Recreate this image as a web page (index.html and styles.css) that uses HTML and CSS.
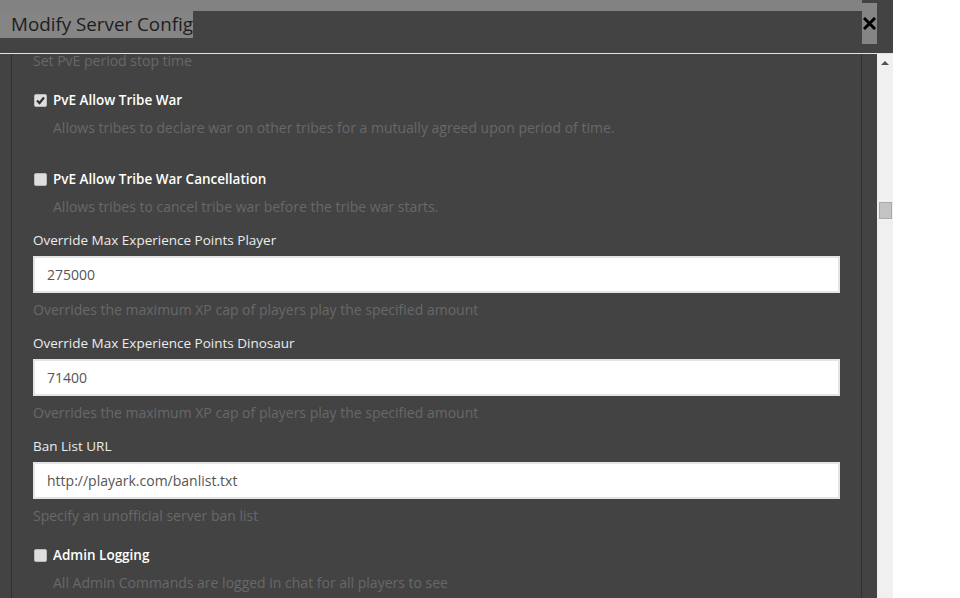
FILE: index.html
```html
<!DOCTYPE html>
<html>
<head>
<meta charset="utf-8">
<link rel="stylesheet" href="styles.css">
</head>
<body>
<div class="modal">
  <div class="header">
    <div class="title-wrap">
      <div class="band"></div>
      <span class="title">Modify Server Config</span>
    </div>
    <div class="close">
      <svg width="13" height="13" viewBox="0 0 13 13"><path d="M2 2 L11 11 M11 2 L2 11" stroke="#000" stroke-width="3" stroke-linecap="square"/></svg>
    </div>
  </div>
  <div class="body">
    <div class="content">
      <div class="help first">Set PvE period stop time</div>

      <div class="check-row gap-a">
        <span class="cb checked"><svg width="11" height="11" viewBox="0 0 11 11"><path d="M2 5.5 L4.5 8 L9 2.5" stroke="#333" stroke-width="2.2" fill="none"/></svg></span>
        <span class="check-label">PvE Allow Tribe War</span>
      </div>
      <div class="help indent">Allows tribes to declare war on other tribes for a mutually agreed upon period of time.</div>

      <div class="check-row gap-b">
        <span class="cb"></span>
        <span class="check-label">PvE Allow Tribe War Cancellation</span>
      </div>
      <div class="help indent">Allows tribes to cancel tribe war before the tribe war starts.</div>

      <div class="field">
        <div class="label">Override Max Experience Points Player</div>
        <div class="input">275000</div>
        <div class="help">Overrides the maximum XP cap of players play the specified amount</div>
      </div>

      <div class="field">
        <div class="label">Override Max Experience Points Dinosaur</div>
        <div class="input">71400</div>
        <div class="help">Overrides the maximum XP cap of players play the specified amount</div>
      </div>

      <div class="field">
        <div class="label">Ban List URL</div>
        <div class="input">http://playark.com/banlist.txt</div>
        <div class="help">Specify an unofficial server ban list</div>
      </div>

      <div class="check-row gap-a">
        <span class="cb"></span>
        <span class="check-label">Admin Logging</span>
      </div>
      <div class="help indent">All Admin Commands are logged in chat for all players to see</div>
    </div>
    <div class="scrollbar">
      <div class="arrow"></div>
      <div class="thumb"></div>
    </div>
  </div>
</div>
</body>
</html>
```
FILE: styles.css
```css
html, body {
  margin: 0;
  padding: 0;
  background: #ffffff;
}
body {
  font-family: "Open Sans", "Liberation Sans", sans-serif;
  font-size: 14px;
  line-height: 20px;
}
.modal {
  width: 893px;
  height: 598px;
  background: #434343;
  overflow: hidden;
}
.header {
  display: flex;
  height: 53px;
  border-bottom: 1px solid #e2e2e2;
}
.title-wrap {
  width: 862px;
  display: flex;
  flex-direction: column;
  align-items: flex-start;
}
.band {
  width: 862px;
  height: 11px;
  background: #828282;
}
.title {
  display: block;
  height: 27px;
  padding-left: 11px;
  background: #858585;
  color: #1d1d1d;
  font-size: 18.8px;
  line-height: 27px;
  white-space: nowrap;
}
.close {
  width: 15px;
  height: 41px;
  margin-top: 3px;
  background: #858585;
  display: flex;
  align-items: center;
  justify-content: center;
}
.body {
  display: flex;
  height: 544px;
  overflow: hidden;
}
.content {
  margin-left: 11px;
  width: 807px;
  flex: none;
  border-left: 1px solid #303030;
  border-right: 1px solid #303030;
  padding: 0 21px;
}
.help {
  color: #686868;
  margin-top: 7px;
  white-space: nowrap;
}
.help.first {
  margin-top: -3px;
}
.help.indent {
  margin-top: 8px;
  padding-left: 20px;
}
.check-row {
  display: flex;
  align-items: center;
  height: 20px;
}
.gap-a {
  margin-top: 19px;
}
.gap-b {
  margin-top: 31px;
}
.cb {
  width: 11px;
  height: 11px;
  margin-left: 1px;
  margin-right: 6px;
  background: #dedede;
  border: 1px solid #bcbcbc;
  border-radius: 2px;
  display: flex;
  align-items: center;
  justify-content: center;
}
.check-label {
  color: #ffffff;
  font-weight: 600;
  font-size: 13.5px;
}
.field {
  margin-top: 13px;
}
.label {
  color: #ececec;
  font-size: 13.5px;
}
.input {
  margin-top: 6px;
  height: 37px;
  box-sizing: border-box;
  border: 2px solid #e4e4e4;
  background: #ffffff;
  color: #555555;
  padding: 0 12px;
  line-height: 33px;
}
.scrollbar {
  margin-left: 15px;
  width: 16px;
  flex: none;
  background: #f0f0f0;
  display: flex;
  flex-direction: column;
  align-items: center;
}
.arrow {
  margin-top: 7px;
  width: 0;
  height: 0;
  border-left: 4px solid transparent;
  border-right: 4px solid transparent;
  border-bottom: 4px solid #505050;
}
.thumb {
  margin-top: 137px;
  width: 11px;
  height: 15px;
  background: #c3c3c3;
  border: 1px solid #a9a9a9;
}
```
